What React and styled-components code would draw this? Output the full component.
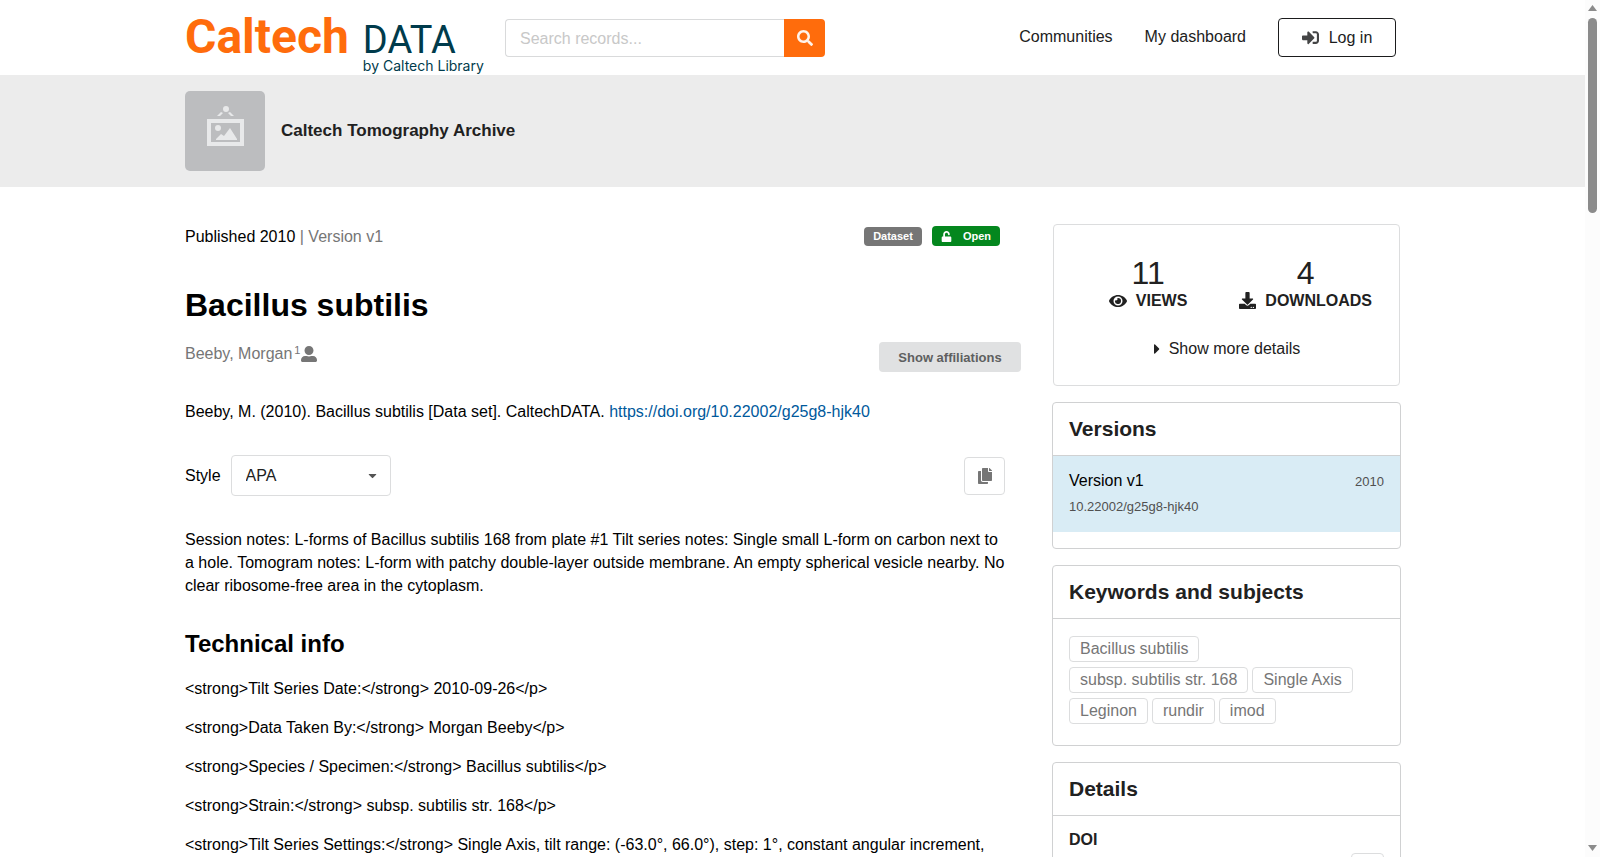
import React from "react";
import styled, { createGlobalStyle } from "styled-components";
import {
  FaCaretDown,
  FaCaretRight,
  FaCopy,
  FaDownload,
  FaEye,
  FaSearch,
  FaSignInAlt,
  FaUnlock,
  FaUserAlt,
} from "react-icons/fa";

const GlobalStyle = createGlobalStyle`
  * { box-sizing: border-box; }
  body {
    margin: 0;
    background: #fff;
    color: #000;
    font: 16px/23px "Liberation Sans", Arial, sans-serif;
  }
  h1, h2, p { margin: 0; }
  button, input, select { font: inherit; color: inherit; }
  button { cursor: pointer; }
  a { color: #00599c; text-decoration: none; }
`;

const Shell = styled.div`
  display: flex;
  height: 100vh;
`;

const Page = styled.div`
  flex: 1;
  min-width: 0;
  overflow-y: auto;
  scrollbar-width: none;
`;

const ScrollTrack = styled.div`
  display: flex;
  flex-direction: column;
  align-items: center;
  justify-content: space-between;
  width: 15px;
  padding: 5px 0 6px;
  background: #fcfcfc;
`;

const ScrollTop = styled.div`
  display: flex;
  flex-direction: column;
  align-items: center;
  gap: 7px;
`;

const ScrollThumb = styled.div`
  width: 9px;
  height: 195px;
  border-radius: 5px;
  background: #8b8b8b;
`;

const Arrow = styled.svg`
  display: block;
  width: 9px;
  height: 6px;
  fill: #8b8b8b;
`;

const Container = styled.div`
  display: flex;
  max-width: 1215px;
  margin: 0 auto;
`;

const HeaderRow = styled(Container)`
  height: 75px;
  padding-right: 4px;
`;

const Logo = styled.a`
  display: flex;
  gap: 14px;
  width: 320px;
  color: #003b4c;
  font-family: Roboto, sans-serif;
`;

const LogoName = styled.span`
  padding-top: 9px;
  color: #ff6c0c;
  font-size: 48px;
  line-height: 56px;
  font-weight: 700;
`;

const LogoSide = styled.span`
  display: flex;
  flex-direction: column;
  padding-top: 22px;
  white-space: nowrap;
`;

const LogoData = styled.span`
  font-size: 38px;
  line-height: 36px;
`;

const LogoBy = styled.span`
  font: 14px/16px Inter, sans-serif;
`;

const SearchForm = styled.form`
  display: flex;
  width: 320px;
  height: 38px;
  margin-top: 19px;
`;

const SearchInput = styled.input`
  flex: 1;
  min-width: 0;
  padding: 0 14px;
  border: 1px solid #d9dadb;
  border-right: 0;
  border-radius: 4px 0 0 4px;
  outline: 0;
  &::placeholder { color: #c8c8c8; }
`;

const SearchButton = styled.button`
  display: grid;
  place-items: center;
  width: 41px;
  padding: 0;
  border: 0;
  border-radius: 0 4px 4px 0;
  background: #ff6c0c;
  color: #fff3ea;
`;

const Nav = styled.nav`
  display: flex;
  align-items: flex-start;
  gap: 32px;
  margin-left: auto;
  padding-top: 18px;
`;

const NavLink = styled.a`
  padding-top: 7px;
  color: #212121;
`;

const LoginButton = styled.button`
  display: flex;
  align-items: center;
  justify-content: center;
  gap: 10px;
  width: 118px;
  height: 39px;
  padding: 0;
  border: 1px solid #1b1c1d;
  border-radius: 4px;
  background: #fff;
  color: #1b1c1d;
  svg { color: #444546; }
`;

const Banner = styled.section`
  background: #ececec;
`;

const BannerRow = styled(Container)`
  align-items: center;
  gap: 16px;
  padding: 16px 0;
`;

const BannerTitle = styled.a`
  padding-bottom: 2px;
  color: #212121;
  font-size: 17px;
  font-weight: 700;
`;

const Placeholder = styled.svg`
  width: 80px;
  height: 80px;
  border-radius: 5px;
  background: #bcbdbf;
`;

const Body = styled(Container)`
  align-items: flex-start;
  gap: 32px;
  padding: 37px 0 40px;
`;

const Main = styled.main`
  flex: 1;
  min-width: 0;
`;

const StatusRow = styled.div`
  display: flex;
  align-items: center;
  justify-content: space-between;
  height: 24px;
  padding-right: 21px;
`;

const Muted = styled.span`
  color: #767676;
`;

const Badges = styled.div`
  display: flex;
  align-items: center;
  gap: 10px;
`;

const Badge = styled.span`
  display: flex;
  align-items: center;
  gap: 11px;
  height: ${(p) => (p.$open ? 20 : 19)}px;
  padding: 0 9px;
  border-radius: 4px;
  background: ${(p) => (p.$open ? "#04871e" : "#767676")};
  color: #fff;
  font-size: 11px;
  font-weight: 700;
`;

const Title = styled.h1`
  margin-top: 38px;
  font-size: 32px;
  line-height: 38px;
`;

const CreatorsRow = styled.div`
  display: flex;
  align-items: flex-start;
  justify-content: space-between;
  margin-top: 18px;
`;

const Creator = styled.a`
  display: flex;
  align-items: center;
  color: #767676;
`;

const Sup = styled.sup`
  margin: 0 1px 0 2px;
  font-size: 11px;
  line-height: 16px;
  align-self: flex-start;
  vertical-align: baseline;
`;

const AffiliationsButton = styled.button`
  width: 142px;
  height: 30px;
  padding: 0;
  border: 0;
  border-radius: 4px;
  background: #e0e1e2;
  color: #5e5f60;
  font-size: 13px;
  font-weight: 700;
`;

const Citation = styled.p`
  margin-top: 28px;
`;

const StyleRow = styled.div`
  display: flex;
  align-items: center;
  margin-top: 32px;
  padding-right: 16px;
`;

const SelectWrap = styled.span`
  display: grid;
  align-items: center;
  width: 160px;
  margin-left: 10px;
  > * { grid-area: 1 / 1; }
  svg {
    justify-self: end;
    margin-right: 12px;
    color: #555;
    pointer-events: none;
  }
`;

const StyleSelect = styled.select`
  width: 100%;
  height: 41px;
  padding: 0 14px;
  appearance: none;
  border: 1px solid #dcddde;
  border-radius: 4px;
  background: #fff;
  color: #212121;
`;

const CopyButton = styled.button`
  display: grid;
  place-items: center;
  width: ${(p) => (p.$small ? 33 : 41)}px;
  height: ${(p) => (p.$small ? 30 : 38)}px;
  margin-left: auto;
  padding: 0;
  border: 1px solid #dcddde;
  border-radius: 4px;
  background: #fff;
  color: #767676;
`;

const Description = styled.p`
  margin-top: 32px;
  padding-right: 16px;
`;

const SectionTitle = styled.h2`
  margin: 31px 0 17px;
  font-size: 24px;
  line-height: 32px;
`;

const InfoLine = styled.p`
  margin-bottom: 16px;
  padding-right: 16px;
`;

const Sidebar = styled.aside`
  display: flex;
  flex-direction: column;
  gap: 16px;
  width: 347px;
`;

const StatsCard = styled.section`
  height: 162px;
  padding: 32px 15px 0;
  border: 1px solid #dcddde;
  border-radius: 4px;
  color: #212121;
`;

const Stats = styled.div`
  display: flex;
  justify-content: flex-end;
  gap: 52px;
  padding-right: 12px;
`;

const Stat = styled.div`
  display: flex;
  flex-direction: column;
  align-items: center;
`;

const StatValue = styled.span`
  font-size: 32px;
  line-height: 32px;
`;

const StatLabel = styled.span`
  display: flex;
  align-items: center;
  gap: 9px;
  font-weight: 700;
`;

const MoreButton = styled.button`
  display: flex;
  align-items: center;
  gap: 4px;
  margin: 25px auto 0;
  padding: 0 4px 0 0;
  border: 0;
  background: none;
`;

const Card = styled.section`
  margin: 0 -1px;
  border: 1px solid #d0d1d2;
  border-radius: 4px;
  color: #212121;
`;

const CardTitle = styled.h2`
  padding: 13px 16px;
  border-bottom: 1px solid #d0d1d2;
  font-size: 21px;
  line-height: 26px;
`;

const VersionItem = styled.div`
  display: flex;
  justify-content: space-between;
  height: 76px;
  margin-bottom: 16px;
  padding: 13px 16px;
  background: #d9ecf5;
  color: #000;
`;

const Small = styled.span`
  display: block;
  margin-top: ${(p) => (p.$below ? 3 : 1)}px;
  color: #505050;
  font-size: 13px;
`;

const Tags = styled.div`
  display: flex;
  flex-wrap: wrap;
  gap: 5px 4px;
  padding: 17px 24px 21px 16px;
`;

const Tag = styled.a`
  height: 26px;
  padding: 0 10px;
  border: 1px solid #dcddde;
  border-radius: 4px;
  color: #767676;
`;

const Details = styled.div`
  padding: 10px 16px 16px;
`;

const DetailName = styled.div`
  font-weight: 700;
  line-height: 27px;
`;

const technicalInfo = [
  "<strong>Tilt Series Date:</strong> 2010-09-26</p>",
  "<strong>Data Taken By:</strong> Morgan Beeby</p>",
  "<strong>Species / Specimen:</strong> Bacillus subtilis</p>",
  "<strong>Strain:</strong> subsp. subtilis str. 168</p>",
  "<strong>Tilt Series Settings:</strong> Single Axis, tilt range: (-63.0°, 66.0°), step: 1°, constant angular increment,",
];

const keywords = [
  "Bacillus subtilis",
  "subsp. subtilis str. 168",
  "Single Axis",
  "Leginon",
  "rundir",
  "imod",
];

function CommunityImage() {
  return (
    <Placeholder viewBox="0 0 80 80" aria-hidden="true">
      <g fill="#e8e9ea">
        <circle cx="41" cy="18" r="3" />
        <path d="M32 25 L36 21 L38 22 L35 25 Z M49 25 L45 21 L43 22 L46 25 Z" />
        <path fillRule="evenodd" d="M22 28 H59 V55 H22 Z M26 32 V51 H55 V32 Z" />
        <circle cx="33" cy="37" r="3" />
        <path d="M31 49 V48 L36 43 L39 45 L45 37 L52 48 V49 Z" />
      </g>
    </Placeholder>
  );
}

export default function App() {
  return (
    <Shell>
      <GlobalStyle />
      <Page>
        <header>
          <HeaderRow>
            <Logo href="#home">
              <LogoName>Caltech</LogoName>
              <LogoSide>
                <LogoData>DATA</LogoData>
                <LogoBy>by Caltech Library</LogoBy>
              </LogoSide>
            </Logo>
            <SearchForm role="search">
              <SearchInput type="text" aria-label="Search records" placeholder="Search records..." />
              <SearchButton type="button" aria-label="Search">
                <FaSearch size={16} />
              </SearchButton>
            </SearchForm>
            <Nav>
              <NavLink href="#communities">Communities</NavLink>
              <NavLink href="#dashboard">My dashboard</NavLink>
              <LoginButton type="button">
                <FaSignInAlt size={17} />
                Log in
              </LoginButton>
            </Nav>
          </HeaderRow>
        </header>

        <Banner>
          <BannerRow>
            <CommunityImage />
            <BannerTitle href="#community">Caltech Tomography Archive</BannerTitle>
          </BannerRow>
        </Banner>

        <Body>
          <Main>
            <StatusRow>
              <span>
                Published 2010 <Muted>| Version v1</Muted>
              </span>
              <Badges>
                <Badge>Dataset</Badge>
                <Badge $open>
                  <FaUnlock size={11} />
                  Open
                </Badge>
              </Badges>
            </StatusRow>
            <Title>Bacillus subtilis</Title>
            <CreatorsRow>
              <Creator href="#creator">
                Beeby, Morgan<Sup>1</Sup>
                <FaUserAlt size={16} />
              </Creator>
              <AffiliationsButton type="button">Show affiliations</AffiliationsButton>
            </CreatorsRow>
            <Citation>
              Beeby, M. (2010). Bacillus subtilis [Data set]. CaltechDATA.{" "}
              <a href="#doi">https://doi.org/10.22002/g25g8-hjk40</a>
            </Citation>
            <StyleRow>
              <label htmlFor="citation-style">Style</label>
              <SelectWrap>
                <StyleSelect id="citation-style" defaultValue="APA">
                  <option>APA</option>
                </StyleSelect>
                <FaCaretDown size={13} />
              </SelectWrap>
              <CopyButton type="button" aria-label="Copy citation">
                <FaCopy size={16} />
              </CopyButton>
            </StyleRow>
            <Description>
              Session notes: L-forms of Bacillus subtilis 168 from plate #1 Tilt series notes: Single
              small L-form on carbon next to a hole. Tomogram notes: L-form with patchy double-layer
              outside membrane. An empty spherical vesicle nearby. No clear ribosome-free area in the
              cytoplasm.
            </Description>
            <SectionTitle>Technical info</SectionTitle>
            {technicalInfo.map((line) => (
              <InfoLine key={line}>{line}</InfoLine>
            ))}
          </Main>

          <Sidebar>
            <StatsCard>
              <Stats>
                <Stat>
                  <StatValue>11</StatValue>
                  <StatLabel>
                    <FaEye size={18} />
                    VIEWS
                  </StatLabel>
                </Stat>
                <Stat>
                  <StatValue>4</StatValue>
                  <StatLabel>
                    <FaDownload size={17} />
                    DOWNLOADS
                  </StatLabel>
                </Stat>
              </Stats>
              <MoreButton type="button">
                <FaCaretRight size={16} />
                Show more details
              </MoreButton>
            </StatsCard>

            <Card>
              <CardTitle>Versions</CardTitle>
              <VersionItem>
                <div>
                  Version v1
                  <Small $below>10.22002/g25g8-hjk40</Small>
                </div>
                <Small>2010</Small>
              </VersionItem>
            </Card>

            <Card>
              <CardTitle>Keywords and subjects</CardTitle>
              <Tags>
                {keywords.map((word) => (
                  <Tag key={word} href="#keyword">
                    {word}
                  </Tag>
                ))}
              </Tags>
            </Card>

            <Card>
              <CardTitle>Details</CardTitle>
              <Details>
                <DetailName>DOI</DetailName>
                <CopyButton type="button" $small aria-label="Copy DOI">
                  <FaCopy size={13} />
                </CopyButton>
              </Details>
            </Card>
          </Sidebar>
        </Body>
      </Page>

      <ScrollTrack aria-hidden="true">
        <ScrollTop>
          <Arrow viewBox="0 0 9 6">
            <path d="M0 6 L4.5 0 L9 6 Z" />
          </Arrow>
          <ScrollThumb />
        </ScrollTop>
        <Arrow viewBox="0 0 9 6">
          <path d="M0 0 L4.5 6 L9 0 Z" />
        </Arrow>
      </ScrollTrack>
    </Shell>
  );
}
